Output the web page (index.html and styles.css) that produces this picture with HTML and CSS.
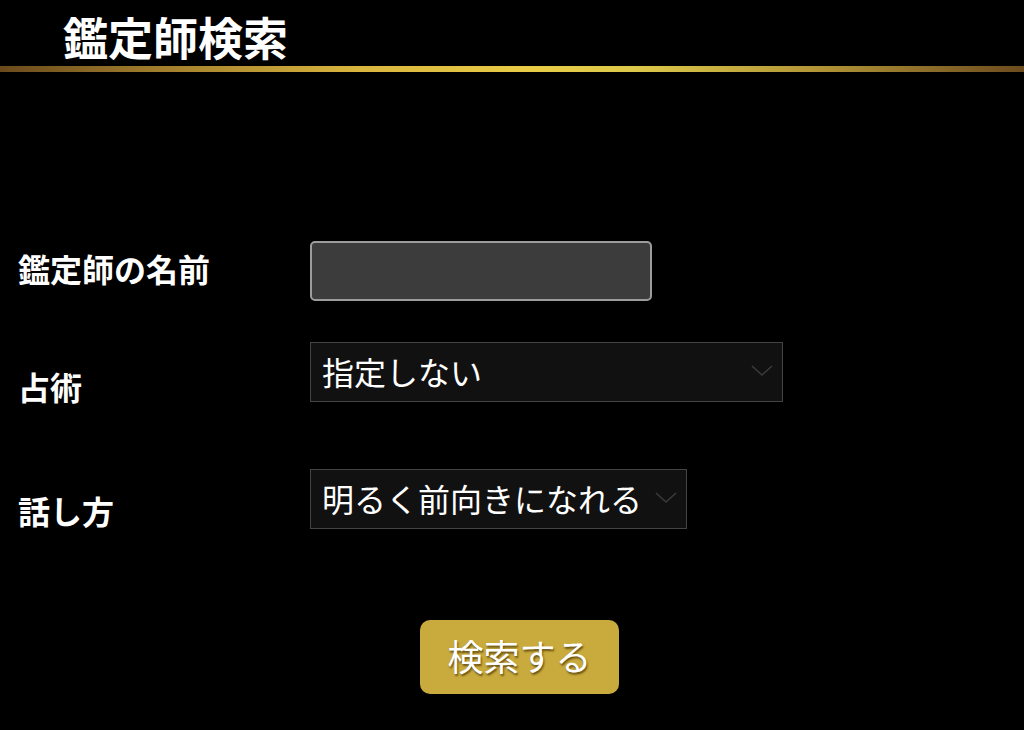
FILE: index.html
```html
<!DOCTYPE html>
<html lang="ja">
<head>
<meta charset="utf-8">
<title>鑑定師検索</title>
<link rel="stylesheet" href="styles.css">
</head>
<body>
<header class="header">
  <h1 class="title">鑑定師検索</h1>
  <div class="gold-line"></div>
</header>
<form class="search-form">
  <div class="row row-name">
    <label class="label label-name" for="name">鑑定師の名前</label>
    <input class="text-input" id="name" type="text">
  </div>
  <div class="row row-method">
    <label class="label label-method" for="method">占術</label>
    <div class="select-wrap select-wide">
      <select class="select" id="method"><option>指定しない</option></select>
      <svg class="chevron" width="22" height="12" viewBox="0 0 22 12"><path d="M1 1 L11 10 L21 1" fill="none" stroke="#3a3a3a" stroke-width="1.6"/></svg>
    </div>
  </div>
  <div class="row row-style">
    <label class="label label-style" for="style">話し方</label>
    <div class="select-wrap select-narrow">
      <select class="select" id="style"><option>明るく前向きになれる</option></select>
      <svg class="chevron" width="22" height="12" viewBox="0 0 22 12"><path d="M1 1 L11 10 L21 1" fill="none" stroke="#3a3a3a" stroke-width="1.6"/></svg>
    </div>
  </div>
  <div class="actions">
    <button class="search-btn" type="button">検索する</button>
  </div>
</form>
</body>
</html>
```
FILE: styles.css
```css
html, body {
  margin: 0;
  padding: 0;
  background: #000;
  color: #fff;
  font-family: "Noto Sans CJK JP", "Noto Sans", sans-serif;
}

.header {
  padding-top: 12px;
}

.title {
  margin: 0;
  padding-left: 63px;
  font-size: 45px;
  line-height: 50px;
  font-weight: 700;
  color: #fff;
}

.gold-line {
  margin-top: 4px;
  height: 6px;
  background: linear-gradient(to right, #6a4a1c 0%, #a07c2c 15%, #d9b53e 35%, #e8cc46 52%, #dcc84a 62%, #b29436 80%, #6c4b1e 100%);
}

.search-form {
  padding-top: 169px;
}

.row {
  display: flex;
  align-items: flex-start;
}

.label {
  width: 292px;
  padding-left: 18px;
  font-size: 32px;
  line-height: 32px;
  font-weight: 700;
  color: #fff;
}

.label-name { margin-top: 11px; }
.label-method { margin-top: 28px; }
.label-style { margin-top: 25px; }

.text-input {
  box-sizing: border-box;
  width: 342px;
  height: 60px;
  background: #3c3c3c;
  border: 2px solid #9c9c9c;
  border-radius: 5px;
  margin: 0;
}

.row-method { margin-top: 41px; }
.row-style { margin-top: 67px; }

.select-wrap {
  position: relative;
  height: 60px;
}

.select-wide { width: 473px; }
.select-narrow { width: 377px; }

.select {
  appearance: none;
  -webkit-appearance: none;
  box-sizing: border-box;
  width: 100%;
  height: 60px;
  margin: 0;
  padding: 0 0 2px 11px;
  background: #111;
  border: 1px solid #444;
  border-radius: 0;
  color: #fff;
  font-family: "Noto Sans CJK JP", "Noto Sans", sans-serif;
  font-size: 32px;
}

.chevron {
  position: absolute;
  right: 10px;
  top: 23px;
  pointer-events: none;
}

.actions {
  margin-top: 91px;
  padding-left: 420px;
}

.search-btn {
  width: 199px;
  height: 74px;
  background: #c9aa3c;
  border: none;
  border-radius: 10px;
  color: #fff;
  font-family: "Noto Sans CJK JP", "Noto Sans", sans-serif;
  font-size: 36px;
  padding: 0 0 4px 0;
  text-shadow: 1px 2px 2px rgba(80, 60, 10, 0.8);
}
```
